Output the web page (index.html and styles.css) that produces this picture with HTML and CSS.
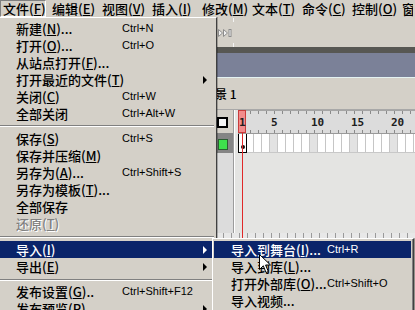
FILE: index.html
```html
<!DOCTYPE html>
<html lang="zh-CN">
<head>
  <meta charset="UTF-8" />
  <meta name="viewport" content="width=device-width, initial-scale=1.0" />
  <title>Flash MX - 文件菜单</title>
  <link rel="stylesheet" href="styles.css">
</head>
<body>
  <div class="menubar">
    <span class="top-item pressed">文件(<u>F</u>)</span>
    <span class="top-item">编辑(<u>E</u>)</span>
    <span class="top-item">视图(<u>V</u>)</span>
    <span class="top-item">插入(<u>I</u>)</span>
    <span class="top-item">修改(<u>M</u>)</span>
    <span class="top-item">文本(<u>T</u>)</span>
    <span class="top-item">命令(<u>C</u>)</span>
    <span class="top-item">控制(<u>O</u>)</span>
    <span class="top-item">窗口(<u>W</u>)</span>
  </div>

  <div class="toolbar">
    <svg class="collapse" width="14" height="8" viewBox="0 0 14 8">
      <path d="M0.5 0.5 L4.5 4 L0.5 7.5 Z M5.5 0.5 L9.5 4 L5.5 7.5 Z" fill="#f2f2f2" stroke="#8c8c8c" stroke-width="1"/>
      <rect x="11" y="0.5" width="2" height="7" fill="#f2f2f2" stroke="#8c8c8c" stroke-width="1"/>
    </svg>
    <span class="tool-sep"></span>
  </div>
  <div class="panel-title"></div>
  <div class="scene">场景 1</div>

  <div class="timeline">
    <div class="layers">
      <div class="layers-head"><span class="outline-icon"></span></div>
      <div class="layer-row"><span class="layer-color"></span></div>
      <div class="layers-empty"></div>
    </div>
    <div class="frames">
      <div class="ruler">
        <span class="num first">1</span>
        <span class="num">5</span>
        <span class="num">10</span>
        <span class="num">15</span>
        <span class="num">20</span>
      </div>
      <div class="frame-row"><span class="keyframe"></span></div>
      <div class="frames-empty"></div>
      <div class="playhead"></div>
    </div>
  </div>
  <div class="hscroll"></div>

  <!-- 文件 menu -->
  <div class="menu file-menu">
    <div class="item"><span>新建(<u>N</u>)...</span><span class="key">Ctrl+N</span></div>
    <div class="item"><span>打开(<u>O</u>)...</span><span class="key">Ctrl+O</span></div>
    <div class="item"><span>从站点打开(<u>F</u>)...</span></div>
    <div class="item"><span>打开最近的文件(<u>T</u>)</span><span></span><span class="arrow"></span></div>
    <div class="item"><span>关闭(<u>C</u>)</span><span class="key">Ctrl+W</span></div>
    <div class="item"><span>全部关闭</span><span class="key">Ctrl+Alt+W</span></div>
    <div class="sep"></div>
    <div class="item"><span>保存(<u>S</u>)</span><span class="key">Ctrl+S</span></div>
    <div class="item"><span>保存并压缩(<u>M</u>)</span></div>
    <div class="item"><span>另存为(<u>A</u>)...</span><span class="key">Ctrl+Shift+S</span></div>
    <div class="item"><span>另存为模板(<u>T</u>)...</span></div>
    <div class="item"><span>全部保存</span></div>
    <div class="item disabled"><span>还原(<u>T</u>)</span></div>
    <div class="sep low"></div>
    <div class="item active"><span>导入(<u>I</u>)</span><span></span><span class="arrow"></span></div>
    <div class="item"><span>导出(<u>E</u>)</span><span></span><span class="arrow"></span></div>
    <div class="sep mid"></div>
    <div class="item"><span>发布设置(<u>G</u>)..</span><span class="key">Ctrl+Shift+F12</span></div>
    <div class="item"><span>发布预览(<u>P</u>)</span><span></span><span class="arrow"></span></div>
  </div>

  <!-- 导入 submenu -->
  <div class="menu submenu">
    <div class="item active"><span>导入到舞台(<u>I</u>)...</span><span class="key">Ctrl+R</span></div>
    <div class="item"><span>导入到库(<u>L</u>)...</span></div>
    <div class="item"><span>打开外部库(<u>O</u>)...</span><span class="key">Ctrl+Shift+O</span></div>
    <div class="item"><span>导入视频...</span></div>
  </div>

  <svg class="cursor" width="13" height="20" viewBox="0 0 13 20">
    <path d="M0.5 0.5 L0.5 15.5 L4.3 11.8 L7 18.5 L9.3 17.5 L6.6 11 L11.5 11 Z" fill="#fff" stroke="#000" stroke-width="1" stroke-linejoin="miter"/>
  </svg>
</body>
</html>
```

FILE: styles.css
```css
body {
  margin: 0;
  width: 415px;
  height: 310px;
  overflow: hidden;
  position: relative;
  background: #d4d0c8;
  color: #000;
  font-family: "Noto Sans CJK SC", sans-serif;
  font-size: 13px;
  font-weight: 500;
}
u {
  text-decoration-thickness: 1px;
  text-underline-offset: 1px;
}

/* top menu bar */
.menubar {
  display: flex;
  height: 17px;
  overflow: hidden;
  background: #d4d0c8;
}
.top-item {
  width: 50px;
  flex: none;
  box-sizing: border-box;
  padding-left: 2px;
  line-height: 17px;
  white-space: nowrap;
}
.top-item.pressed {
  width: 46px;
  margin-right: 4px;
  border: 1px solid;
  border-color: #808080 #fff #fff #808080;
  line-height: 15px;
}
.top-item:last-child {
  width: 13px;
  overflow: hidden;
}

/* workspace behind the menu */
.toolbar {
  height: 30px;
  display: flex;
  align-items: center;
  padding-left: 218px;
}
.collapse {
  display: block;
  margin-top: 2px;
}
.tool-sep {
  width: 1px;
  height: 29px;
  margin-left: 1px;
  background: linear-gradient(#f4f4f4 0 4px, transparent 4px 25px, #f4f4f4 25px);
}
.panel-title {
  height: 24px;
  border-top: 6px solid #575753;
  border-bottom: 1px solid #e4f2f2;
  background: #7b8198;
}
.scene {
  height: 31px;
  line-height: 31px;
  padding-left: 203px;
  border-bottom: 1px solid #a8a8a8;
  font-size: 12px;
}

.timeline {
  display: flex;
  height: 123px;
}
.layers {
  width: 233px;
  flex: none;
  border-right: 1px solid #9c9c9c;
  display: flex;
  flex-direction: column;
}
.layers-head {
  height: 23px;
  display: flex;
  justify-content: flex-end;
  align-items: center;
  padding-right: 5px;
}
.outline-icon {
  width: 11px;
  height: 11px;
  box-sizing: border-box;
  border: 2px solid #000;
  background: #f4f4f4;
  margin-top: 1px;
}
.layer-row {
  height: 20px;
  box-sizing: border-box;
  background: #858585;
  display: flex;
  justify-content: flex-end;
  align-items: flex-end;
  padding: 0 5px 3px 0;
}
.layer-color {
  width: 10px;
  height: 11px;
  box-sizing: border-box;
  background: #3ee04c;
  border: 1px solid #2c5e32;
}
.layers-empty {
  flex: 1;
  background: #dcdcdc;
}

.frames {
  flex: 1;
  position: relative;
  padding-left: 3px;
  border-left: 1px solid #fff;
  background: #e4e4e2;
  display: flex;
  flex-direction: column;
}
.ruler {
  height: 23px;
  box-sizing: border-box;
  border-top: 1px solid #a4a4a4;
  display: flex;
  align-items: center;
  background:
    repeating-linear-gradient(90deg, transparent 0 4px, #8a8a8a 4px 5px, transparent 5px 8px) left top / 100% 3px no-repeat,
    repeating-linear-gradient(90deg, transparent 0 4px, #8a8a8a 4px 5px, transparent 5px 8px) left bottom / 100% 3px no-repeat,
    #dcdcdc;
  font-family: "DejaVu Sans Mono", monospace;
  font-weight: bold;
  font-size: 11px;
  color: #1e1e1e;
}
.num {
  width: 40px;
  flex: none;
  padding-left: 1px;
  box-sizing: border-box;
  position: relative;
  z-index: 1;
}
.num.first {
  width: 32px;
}
.frame-row {
  height: 20px;
  box-sizing: border-box;
  border-top: 1px solid #9a9a9a;
  border-bottom: 1px solid #c8c8c8;
  background:
    repeating-linear-gradient(90deg, transparent 0 7px, #c6c6c6 7px 8px),
    repeating-linear-gradient(90deg, #fff 0 32px, #e2e2e2 32px 40px);
}
.keyframe {
  display: block;
  position: relative;
  width: 9px;
  height: 19px;
  box-sizing: border-box;
  border: 1px solid #000;
  border-top: none;
  background: #fff;
}
.keyframe::after {
  content: "";
  position: absolute;
  left: 2px;
  bottom: 3px;
  width: 4px;
  height: 4px;
  border-radius: 50%;
  background: #111;
}
.frames-empty {
  flex: 1;
}
.playhead {
  position: absolute;
  left: 3px;
  top: 0;
  width: 8px;
  height: 23px;
  box-sizing: border-box;
  border: 1px solid #c83c3c;
  background: #f28c8c;
}
.playhead::after {
  content: "";
  position: absolute;
  left: 3px;
  top: 22px;
  width: 1px;
  height: 105px;
  background: #e02828;
}
.hscroll {
  height: 6px;
  background: repeating-linear-gradient(90deg, transparent 0 7px, #9a9a9a 7px 8px), #e8e8e8;
}

/* drop-down menus */
.menu {
  position: absolute;
  overflow: hidden;
  background: #d4d0c8;
  border-top: 1px solid #fff;
  border-right: 1px solid #404040;
  box-shadow: 1px 0 0 rgba(0, 0, 0, 0.25);
  padding-top: 2px;
}
.file-menu {
  left: 0;
  top: 17px;
  bottom: 0;
  width: 216px;
}
.submenu {
  left: 212px;
  top: 238px;
  bottom: 0;
  width: 200px;
  border-left: 1px solid #fff;
  box-shadow: inset -1px 0 #808080, 1px 0 0 rgba(0, 0, 0, 0.3);
}
.item {
  display: grid;
  grid-template-columns: 106px 1fr 8px;
  align-items: center;
  height: 17px;
  line-height: 17px;
  padding: 0 7px 0 16px;
  white-space: nowrap;
}
.submenu .item {
  grid-template-columns: 96px 1fr;
  padding-left: 17px;
  margin: 0 2px 0 1px;
}
.item.active {
  background: #0a246a;
  color: #fff;
}
.item.disabled {
  color: #808080;
  text-shadow: 1px 1px 0 #fff;
}
.key {
  font-family: "Liberation Sans", sans-serif;
  font-size: 11px;
  font-weight: normal;
}
.arrow {
  width: 0;
  height: 0;
  margin-left: 2px;
  border-left: 4px solid currentColor;
  border-top: 4px solid transparent;
  border-bottom: 4px solid transparent;
}
.sep {
  height: 0;
  margin: 3px 2px 3px 0;
  border-top: 1px solid #808080;
  border-bottom: 1px solid #fff;
}
.sep.low {
  margin: 4px 2px 3px 0;
}
.sep.mid {
  margin: 4px 2px 2px 0;
}

.cursor {
  position: absolute;
  left: 259px;
  top: 254px;
}
```
